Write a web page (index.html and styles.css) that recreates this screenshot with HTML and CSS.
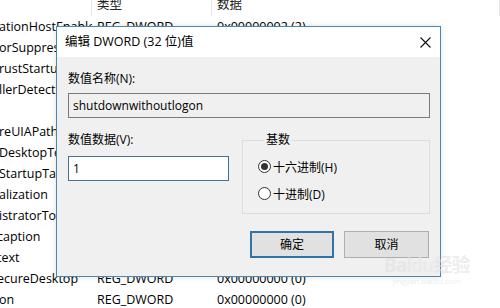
FILE: index.html
```html
<!DOCTYPE html>
<html lang="zh-CN">
<head>
    <meta charset="UTF-8">
    <title>编辑 DWORD (32 位)值</title>
    <link rel="stylesheet" href="styles.css">
</head>
<body>
    <div class="list">
        <div class="list-head">
            <div class="col col-name"></div>
            <div class="col col-type">类型</div>
            <div class="col col-data">数据</div>
        </div>
        <div class="row"><span class="col col-name">ationHostEnabled</span><span class="col col-type">REG_DWORD</span><span class="col col-data">0x00000002 (2)</span></div>
        <div class="row"><span class="col col-name">orSuppression</span><span class="col col-type">REG_DWORD</span><span class="col col-data">0x00000001 (1)</span></div>
        <div class="row"><span class="col col-name">rustStartupTasks</span><span class="col col-type">REG_DWORD</span><span class="col col-data">0x00000002 (2)</span></div>
        <div class="row"><span class="col col-name">llerDetection</span><span class="col col-type">REG_DWORD</span><span class="col col-data">0x00000001 (1)</span></div>
        <div class="row"><span class="col col-name"></span><span class="col col-type"></span><span class="col col-data"></span></div>
        <div class="row"><span class="col col-name">reUIAPaths</span><span class="col col-type">REG_DWORD</span><span class="col col-data">0x00000001 (1)</span></div>
        <div class="row"><span class="col col-name">DesktopToggle</span><span class="col col-type">REG_DWORD</span><span class="col col-data">0x00000000 (0)</span></div>
        <div class="row"><span class="col col-name">StartupTasks</span><span class="col col-type">REG_DWORD</span><span class="col col-data">0x00000002 (2)</span></div>
        <div class="row"><span class="col col-name">alization</span><span class="col col-type">REG_DWORD</span><span class="col col-data">0x00000001 (1)</span></div>
        <div class="row"><span class="col col-name">istratorToken</span><span class="col col-type">REG_DWORD</span><span class="col col-data">0x00000000 (0)</span></div>
        <div class="row"><span class="col col-name cut">caption</span><span class="col col-type">REG_SZ</span><span class="col col-data"></span></div>
        <div class="row"><span class="col col-name cut">text</span><span class="col col-type">REG_SZ</span><span class="col col-data"></span></div>
        <div class="row"><span class="col col-name cut">ecureDesktop</span><span class="col col-type">REG_DWORD</span><span class="col col-data">0x00000000 (0)</span></div>
        <div class="row"><span class="col col-name">on</span><span class="col col-type">REG_DWORD</span><span class="col col-data">0x00000000 (0)</span></div>
    </div>

    <div class="dialog">
        <div class="titlebar">
            <span class="title">编辑 DWORD (32 位)值</span>
            <svg class="close" width="11" height="11" viewBox="0 0 11 11">
                <path d="M0.5 0.5 L10.5 10.5 M10.5 0.5 L0.5 10.5" stroke="#111" stroke-width="1.1" fill="none"/>
            </svg>
        </div>
        <div class="dialog-body">
            <div class="label label-name">数值名称(N):</div>
            <div class="field field-readonly">shutdownwithoutlogon</div>
            <div class="middle">
                <div class="value-col">
                    <div class="label">数值数据(V):</div>
                    <div class="field field-value">1</div>
                </div>
                <fieldset class="base">
                    <legend>基数</legend>
                    <div class="radio-line"><span class="radio checked"></span>十六进制(H)</div>
                    <div class="radio-line"><span class="radio"></span>十进制(D)</div>
                </fieldset>
            </div>
            <div class="buttons">
                <div class="btn btn-default">确定</div>
                <div class="btn">取消</div>
            </div>
        </div>
    </div>

    <div class="watermark">
        <div class="wm-logo">Bai<span class="paw">du</span>经验</div>
        <div class="wm-url">jingyan.baidu.com</div>
    </div>
</body>
</html>
```

FILE: styles.css
```css
body {
    margin: 0;
    width: 500px;
    height: 308px;
    overflow: hidden;
    background-color: #fff;
    font-family: 'Open Sans', 'Noto Sans CJK SC', sans-serif;
    font-size: 12px;
    color: #000;
    position: relative;
}

/* background registry list */
.list {
    font-size: 12.5px;
}
.list-head {
    display: flex;
    height: 16px;
    line-height: 9px;
    color: #222;
}
.list-head .col {
    border-right: 1px solid #e5e5e5;
    height: 16px;
}
.row {
    display: flex;
    height: 21px;
    line-height: 21px;
    white-space: nowrap;
}
.col {
    overflow: hidden;
    box-sizing: border-box;
}
.col-name {
    width: 92px;
}
.row .col-name {
    text-indent: -1px;
}
.row .cut {
    text-indent: -3px;
}
.col-type {
    width: 120px;
    padding-left: 5px;
}
.col-data {
    width: 288px;
    padding-left: 5px;
}

/* dialog */
.dialog {
    position: absolute;
    left: 56px;
    top: 26px;
    width: 385px;
    height: 251px;
    box-sizing: border-box;
    border: 1px solid #4a87b2;
    background-color: #f0f0f0;
    box-shadow: 0 0 6px rgba(0, 0, 0, 0.12);
    display: flex;
    flex-direction: column;
}
.titlebar {
    height: 30px;
    background-color: #fff;
    display: flex;
    align-items: center;
    justify-content: space-between;
    padding: 0 9px 0 8px;
}
.title {
    font-size: 12.5px;
    line-height: 16px;
}
.close {
    display: block;
}
.dialog-body {
    flex: 1;
    padding: 15px 10px 0 11px;
    display: flex;
    flex-direction: column;
}
.label {
    line-height: 14px;
    height: 14px;
}
.field {
    height: 25px;
    box-sizing: border-box;
    border: 1px solid #7a7a7a;
    padding: 0 4px;
    line-height: 23px;
}
.field-readonly {
    margin-top: 7px;
    background-color: #f0f0f0;
}
.middle {
    display: grid;
    grid-template-columns: 161px 188px;
    column-gap: 13px;
    margin-top: 15px;
}
.field-value {
    margin-top: 9px;
    background-color: #fff;
    border-color: #3f7399;
}
.base {
    margin: 0;
    padding: 6px 0 0 15px;
    border: 1px solid #dcdcdc;
    height: 81px;
    box-sizing: border-box;
}
.base legend {
    padding: 0 2px;
    margin-left: 6px;
    line-height: 14px;
}
.radio-line {
    display: flex;
    align-items: center;
    height: 27px;
    gap: 2px;
}
.radio {
    width: 13px;
    height: 13px;
    box-sizing: border-box;
    border: 1px solid #333;
    border-radius: 50%;
    background-color: #fff;
    position: relative;
}
.radio.checked::after {
    content: "";
    position: absolute;
    left: 2px;
    top: 2px;
    width: 7px;
    height: 7px;
    border-radius: 50%;
    background-color: #333;
}
.buttons {
    display: flex;
    justify-content: flex-end;
    gap: 10px;
    margin-top: 17px;
    margin-right: 1px;
}
.btn {
    width: 85px;
    height: 27px;
    box-sizing: border-box;
    border: 1px solid #adadad;
    background-color: #e1e1e1;
    text-align: center;
    line-height: 25px;
}
.btn-default {
    width: 84px;
    border: 2px solid #2f74a8;
    line-height: 23px;
}

/* faint watermark */
.watermark {
    position: absolute;
    left: 384px;
    top: 254px;
    color: rgba(225, 225, 225, 0.6);
    text-align: center;
}
.wm-logo {
    font-size: 19px;
    font-weight: bold;
    line-height: 22px;
    letter-spacing: -1px;
}
.paw {
    color: rgba(230, 230, 230, 0.6);
}
.wm-url {
    font-size: 8px;
    line-height: 10px;
}
```
